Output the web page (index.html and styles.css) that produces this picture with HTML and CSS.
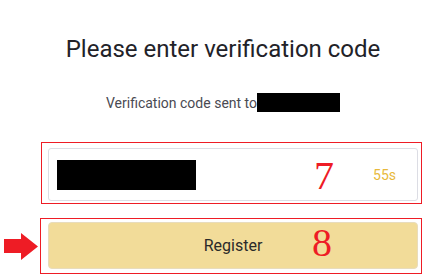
FILE: index.html
```html
<!DOCTYPE html>
<html>
<head>
<meta charset="utf-8">
<link rel="stylesheet" href="styles.css">
</head>
<body>
<div class="page">
  <h1 class="title">Please enter verification code</h1>
  <p class="sub">Verification code sent to<span class="redact"></span></p>
  <div class="form">
    <div class="field">
      <span class="redact-code"></span>
      <span class="timer">55s</span>
      <span class="num num-7">7</span>
      <div class="frame frame-1"></div>
    </div>
    <div class="btn-wrap">
      <button class="btn">Register</button>
      <span class="num num-8">8</span>
      <div class="frame frame-2"></div>
    </div>
  </div>
  <svg class="arrow" width="34" height="28" viewBox="0 0 34 28">
    <polygon points="0,6 17,6 17,0 34,13.5 17,27 17,20 0,20" fill="#ee1c25"/>
  </svg>
</div>
</body>
</html>
```
FILE: styles.css
```css
html, body {
  margin: 0;
  padding: 0;
  background: #ffffff;
}
.page {
  position: relative;
  width: 446px;
  height: 280px;
  font-family: Roboto, "Liberation Sans", sans-serif;
}
.title {
  margin: 0;
  padding-top: 34.5px;
  font-size: 24px;
  line-height: 28px;
  font-weight: 400;
  color: #222228;
  text-align: center;
}
.sub {
  margin: 30px 0 0;
  font-size: 14px;
  line-height: 20px;
  color: #4a4a52;
  text-align: center;
  display: flex;
  justify-content: center;
  align-items: center;
}
.redact {
  display: inline-block;
  width: 83px;
  height: 19px;
  background: #000;
}
.form {
  margin: 35.5px 0 0 48px;
  width: 370px;
}
.field {
  position: relative;
  box-sizing: border-box;
  height: 53px;
  border: 1px solid #dcdde4;
  border-radius: 3px;
  display: flex;
  align-items: center;
  padding: 0 21px 0 8px;
}
.redact-code {
  width: 139px;
  height: 30px;
  background: #000;
}
.timer {
  margin-left: auto;
  font-size: 14px;
  color: #e8b93a;
}
.btn-wrap {
  position: relative;
  margin-top: 21px;
}
.btn {
  display: block;
  box-sizing: border-box;
  width: 370px;
  height: 47px;
  background: #f2dc99;
  border: 1px solid #e8dcbc;
  border-radius: 4px;
  font-family: Roboto, "Liberation Sans", sans-serif;
  font-size: 16px;
  color: #2a2a2a;
  padding: 0;
}
.num {
  position: absolute;
  font-family: "Liberation Serif", serif;
  font-size: 40px;
  line-height: 40px;
  color: #ee1c25;
}
.num-7 {
  left: 265px;
  top: 6.5px;
}
.num-8 {
  left: 264px;
  top: 0.5px;
}
.frame {
  position: absolute;
  border: 1px solid #ee1c25;
  pointer-events: none;
}
.frame-1 {
  left: -8px;
  top: -7px;
  right: -5px;
  bottom: -4px;
}
.frame-2 {
  left: -8px;
  top: -4px;
  right: -4px;
  bottom: -5px;
}
.arrow {
  position: absolute;
  left: 4px;
  top: 233px;
}
```
